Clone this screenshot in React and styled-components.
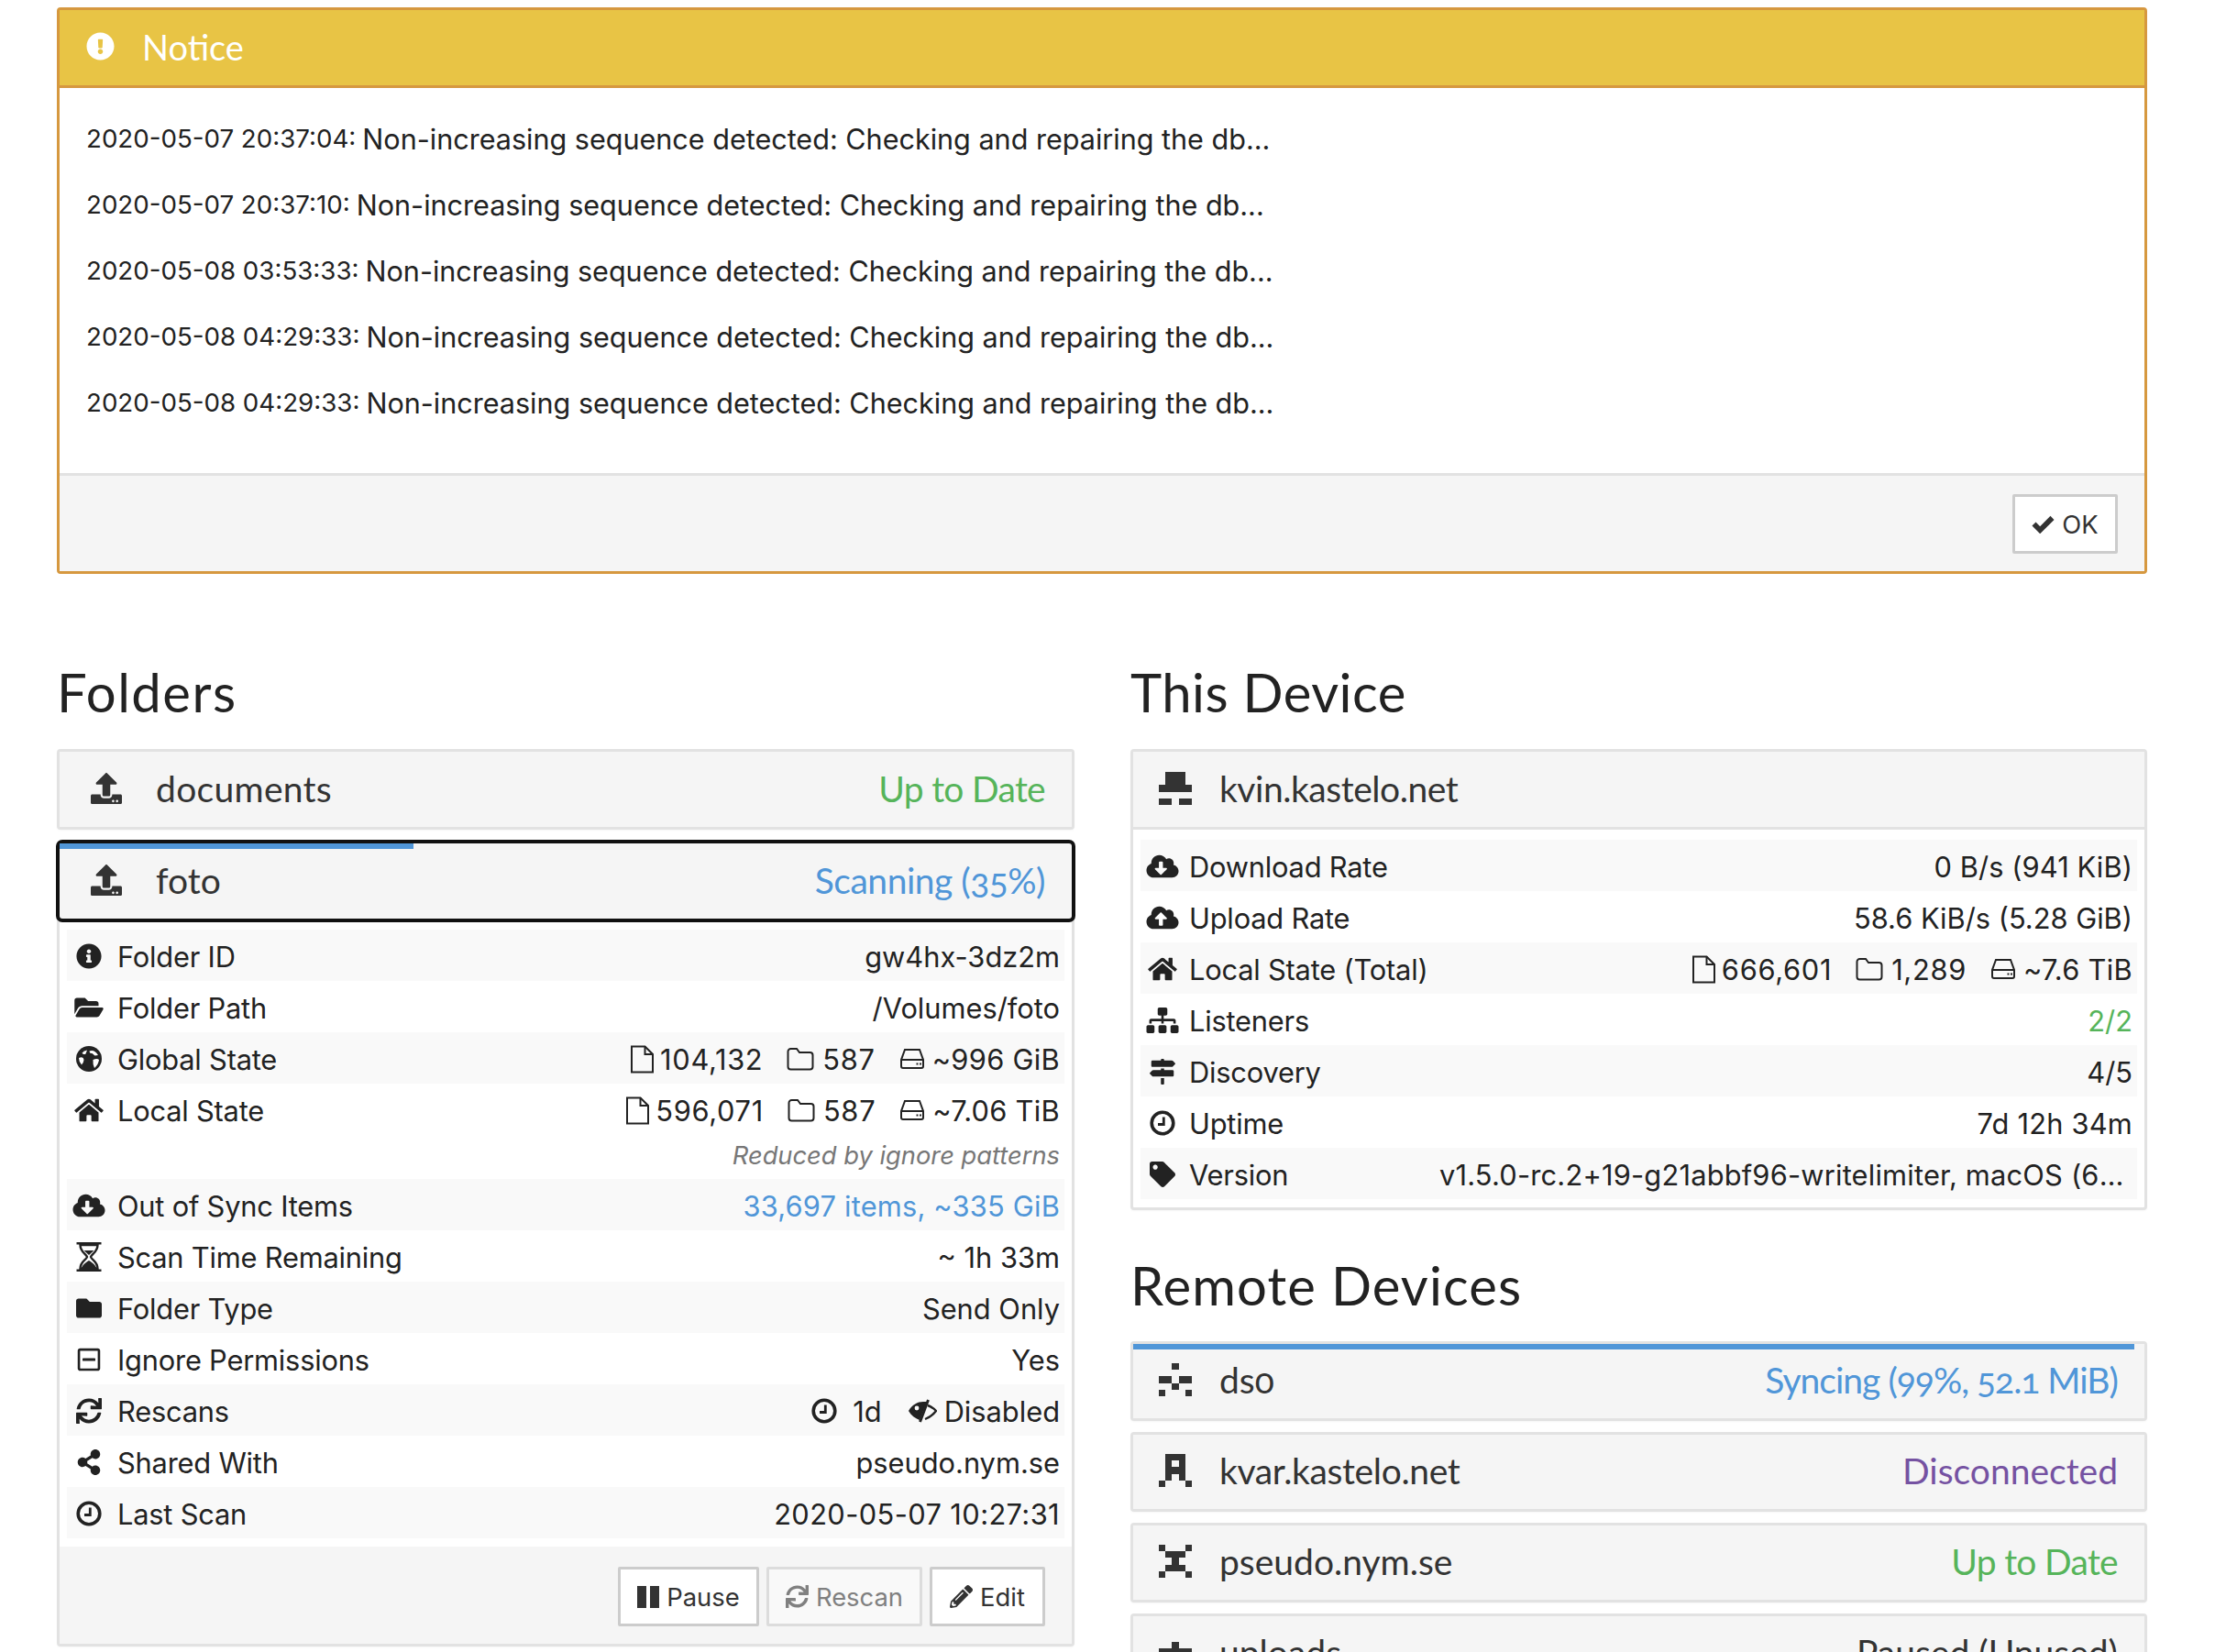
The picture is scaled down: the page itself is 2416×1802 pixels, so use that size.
import React from "react";
import styled, { createGlobalStyle } from "styled-components";
import {
  FaExclamationCircle, FaUpload, FaInfoCircle, FaFolderOpen, FaHome,
  FaCloudDownloadAlt, FaCloudUploadAlt, FaFolder, FaRegMinusSquare, FaSync,
  FaShareAlt, FaPencilAlt, FaSitemap, FaMapSigns, FaTag,
} from "react-icons/fa";

const BODY = `"Inter", "Liberation Sans", sans-serif`;
const HEAD = `"Lato", "Open Sans", sans-serif`;

const Global = createGlobalStyle`
  html, body { margin: 0; padding: 0; height: 1802px; overflow: hidden; background: #fff; }
  body { font-family: ${BODY}; color: #222; }
  * { box-sizing: border-box; }
`;

const Page = styled.div`
  width: 2280px;
  margin-left: 62px;
  padding-top: 8px;
`;

const Notice = styled.section`
  height: 618px;
  border: 3px solid #d6983f;
  border-radius: 4px;
  display: flex;
  flex-direction: column;
  background: #fff;
`;

const NoticeHead = styled.header`
  height: 85px;
  border-bottom: 3px solid #d6983f;
  background: #e8c445;
  color: #fff;
  display: flex;
  align-items: center;
  padding: 0 0 3px 29px;
  font: 400 38px ${HEAD};
  svg { width: 31px; height: 31px; margin-right: 30px; }
`;

const NoticeBody = styled.div`
  flex: 1;
  padding: 19px 29px 0;
`;

const NoticeLine = styled.p`
  margin: 0;
  height: 72px;
  display: flex;
  align-items: center;
  white-space: pre;
  font-size: 30.55px;
  color: #222;
  small { font-size: 27.7px; margin-right: 7px; }
`;

const NoticeFoot = styled.footer`
  height: 107px;
  border-top: 3px solid #e2e2e2;
  background: #f5f5f5;
  display: flex;
  justify-content: flex-end;
  align-items: flex-start;
  padding: 20px 29px 0 0;
`;

const Button = styled.button`
  height: 65px;
  width: ${(p) => p.$w}px;
  border: 3px solid ${(p) => (p.$off ? "#dcdcdc" : "#ccc")};
  border-radius: 2px;
  background: ${(p) => (p.$off ? "#f9f9f9" : "#fff")};
  color: ${(p) => (p.$off ? "#808080" : "#333")};
  font: 400 27.4px ${BODY};
  display: inline-flex;
  align-items: center;
  justify-content: center;
  gap: 8px;
  padding: 0;
  svg { width: 25px; height: 25px; flex: none; }
`;

const Columns = styled.div`
  display: grid;
  grid-template-columns: 1110px 1109px;
  column-gap: 61px;
  margin-top: 99px;
  align-items: start;
`;

const Heading = styled.h3`
  margin: ${(p) => p.$before || 0}px 0 ${(p) => p.$after || 32}px;
  height: 60px;
  font: 400 58px/60px ${HEAD};
  letter-spacing: ${(p) => p.$ls ?? 1.2}px;
  color: #222;
`;

const Panel = styled.div`
  border: 3px solid #e2e2e2;
  border-radius: 4px;
  background: #fff;
  margin-bottom: ${(p) => p.$after ?? 12}px;
  box-shadow: 0 1px 2px rgba(0, 0, 0, 0.04);
`;

const PanelHead = styled.div`
  position: relative;
  height: ${(p) => p.$h || 82}px;
  background: #f5f5f5;
  display: flex;
  align-items: center;
  justify-content: space-between;
  padding: 0 29px 3px ${(p) => p.$pad || 34}px;
  font: 400 39px ${HEAD};
  font-variant-numeric: oldstyle-nums;
  color: #333;
  border-bottom: ${(p) => (p.$line ? "3px solid #e2e2e2" : "0")};
  box-shadow: ${(p) => (p.$focus ? "0 0 0 4px #111" : "none")};
  border-radius: ${(p) => (p.$focus ? "3px" : "0")};
`;

const Progress = styled.i`
  position: absolute;
  left: 0;
  top: 0;
  height: 6px;
  background: #5096d8;
`;

const Title = styled.span`
  display: flex;
  align-items: center;
  letter-spacing: ${(p) => p.$ls || 0}px;
`;

const HeadIcon = styled.span`
  display: inline-flex;
  width: ${(p) => p.$w || 34}px;
  margin-right: ${(p) => p.$gap || 37}px;
  svg { width: ${(p) => p.$w || 34}px; height: ${(p) => p.$w || 34}px; display: block; }
`;

const Status = styled.span`
  color: ${(p) => p.$c || "#333"};
  letter-spacing: ${(p) => p.$ls || 0}px;
`;

const Rows = styled.div`
  --label-gap: ${(p) => (p.$tight ? 10 : 12)}px;
  padding: ${(p) => p.$top}px 8px ${(p) => p.$bottom}px;
`;

const Row = styled.div`
  height: 56px;
  display: flex;
  align-items: center;
  justify-content: space-between;
  padding: 2px 5px 0;
  font-size: 30.8px;
  color: #222;
  background: ${(p) => (p.$shade ? "#f9f9f9" : "#fff")};
`;

const Label = styled.span`
  display: flex;
  align-items: center;
  white-space: nowrap;
  flex: none;
  letter-spacing: -0.2px;
  svg { width: 38px; height: 28px; margin-right: var(--label-gap); flex: none; color: #222; }
`;

const Value = styled.span`
  display: flex;
  align-items: center;
  white-space: nowrap;
  letter-spacing: ${(p) => p.$ls || 0}px;
  color: ${(p) => p.$c || "#222"};
`;

const Stat = styled.span`
  display: inline-flex;
  align-items: center;
  gap: ${(p) => p.$gap || 8}px;
  margin-left: ${(p) => p.$ml ?? 26}px;
  letter-spacing: ${(p) => p.$ls ?? 0.7}px;
  svg { flex: none; }
`;

const Note = styled.div`
  height: 48px;
  padding: 0 5px 3px;
  display: flex;
  align-items: center;
  justify-content: flex-end;
  font-size: 27.3px;
  font-style: italic;
  color: #777;
`;

const Clip = styled.span`
  display: block;
  width: 751px;
  margin-right: 5px;
  overflow: hidden;
  text-overflow: ellipsis;
  white-space: nowrap;
  letter-spacing: 0.2px;
`;

const PanelFoot = styled.div`
  height: 106px;
  background: #f5f5f5;
  display: flex;
  justify-content: flex-end;
  gap: 8px;
  padding: 22px 29px 0 0;
`;

const TallSvg = styled.svg`
  && { height: 32px; }
`;

const PIX = {
  kvin: ".XXX. .XXX. XXXXX ..... XX.XX",
  ds0: "..X.. ..... XX.XX ..X.. X...X",
  kvar: ".XXX. .X.X. .XXX. .X.X. X...X",
  pseudo: "X...X .XXX. ..X.. .XXX. X...X",
  uploads: "..... ..X.. XXXXX X...X ..X..",
};

function Identicon({ id }) {
  const rows = PIX[id].split(" ");
  return (
    <svg viewBox="0 0 5 5" shapeRendering="crispEdges">
      {rows.flatMap((r, y) =>
        [...r].map((c, x) => (c === "X" ? <rect key={`${x}-${y}`} x={x} y={y} width="1" height="1" fill="#333" /> : null))
      )}
    </svg>
  );
}

const FileO = () => (
  <svg viewBox="0 0 27 31" width="27" height="31" fill="none" stroke="#222" strokeWidth="2">
    <path d="M2 1.5h14.5l8.5 8.5v19.5H2z" />
    <path d="M16.5 1.5V10H25" />
  </svg>
);
const FolderO = () => (
  <svg viewBox="0 0 30 26" width="30" height="26" fill="none" stroke="#222" strokeWidth="2">
    <path d="M1.5 5a3 3 0 0 1 3-3h6.5l3 4h11.500a3 3 0 0 1 3 3v12.500a3 3 0 0 1-3 3h-21a3 3 0 0 1-3-3z" />
  </svg>
);
const HddO = () => (
  <svg viewBox="0 0 28 24" width="28" height="24" fill="none" stroke="#222" strokeWidth="2">
    <path d="M6 2h16l4 11v7a2 2 0 0 1-2 2H4a2 2 0 0 1-2-2v-7z" />
    <path d="M2 13h24" />
    <path d="M18.500 17.500h2M22 17.500h2" />
  </svg>
);
const ClockO = ({ size }) => (
  <svg viewBox="0 0 28 28" width={size} height={size} fill="none" stroke="#222">
    <circle cx="14" cy="14" r="11.800" strokeWidth="3.600" />
    <path d="M15.300 7.500v8H9" strokeWidth="2.800" />
  </svg>
);
const EyeSlash = () => (
  <svg viewBox="0 0 32 26" width="32" height="26" fill="none" stroke="#222">
    <path d="M1 13C5 6 11 3 17 3h4l-8 20C8 21 4 18 1 13z" fill="#222" stroke="none" />
    <circle cx="10" cy="10" r="2.400" fill="#f9f9f9" stroke="none" />
    <path d="M22.500 1L13.500 25" strokeWidth="3" />
    <path d="M22 7c3 1 6 3 9 6-3 4-7 7-12 9" strokeWidth="2.400" />
  </svg>
);
const Globe = () => (
  <svg viewBox="0 0 28 28">
    <circle cx="14" cy="14" r="14" fill="#222" />
    <g fill="#fff">
      <path d="M6.500 7.500Q9 5.200 12 4.500L10.500 8.500Q8 10 6.500 7.500z" />
      <path d="M14.500 5.500Q20 3.500 24 10L20.500 10.500 17.500 8Q14.500 8.500 14.500 5.500z" />
      <path d="M3 13Q8 11 8.500 15 8 19 6 20.500 3 17 3 13z" />
      <path d="M18.500 15Q23 13 25 15 24.500 20 20 24 18 20 18.500 15z" />
    </g>
  </svg>
);
const Hourglass = () => (
  <TallSvg viewBox="0 0 27 32" fill="none">
    <path d="M0 1.200h27M0 30.800h27" stroke="#222" strokeWidth="2.400" />
    <path d="M4 3c0 8 6.500 9.500 7.500 13C10.500 19.500 4 21 4 29h19c0-8-6.500-9.500-7.500-13C16.500 12.500 23 11 23 3z" stroke="#222" strokeWidth="2.400" />
    <path d="M5 29c1-4 5-7 8.500-9 3.500 2 7.500 5 8.500 9z" fill="#222" />
    <path d="M8 9h11l-5.500 5z" fill="#222" />
  </TallSvg>
);
const Check = () => (
  <svg viewBox="0 0 26 21" style={{ width: 25, height: 20 }} fill="none" stroke="#333" strokeWidth="6">
    <path d="M2.500 10L9.500 17L23.500 3" />
  </svg>
);
const Pause = () => (
  <svg viewBox="0 0 24 24" style={{ width: 24, height: 24 }} fill="#333">
    <rect x="0" y="0" width="10" height="24" />
    <rect x="14" y="0" width="10" height="24" />
  </svg>
);

const NoticeRows = ["2020-05-07 20:37:04:", "2020-05-07 20:37:10:", "2020-05-08 03:53:33:", "2020-05-08 04:29:33:", "2020-05-08 04:29:33:"];

const triple = (a, b, c) => (
  <>
    <Stat $gap={6}><FileO />{a}</Stat>
    <Stat $gap={9}><FolderO />{b}</Stat>
    <Stat $ls={0.3}><HddO />{c}</Stat>
  </>
);

export default function App() {
  return (
    <Page>
      <Global />
      <Notice>
        <NoticeHead><FaExclamationCircle />Notice</NoticeHead>
        <NoticeBody>
          {NoticeRows.map((d, i) => (
            <NoticeLine key={i}><small>{d}</small>Non-increasing sequence detected: Checking and repairing the db...</NoticeLine>
          ))}
        </NoticeBody>
        <NoticeFoot><Button $w={115}><Check />OK</Button></NoticeFoot>
      </Notice>

      <Columns>
        <div>
          <Heading $ls={1.5}>Folders</Heading>
          <Panel>
            <PanelHead>
              <Title $ls={0.3}><HeadIcon><FaUpload /></HeadIcon>documents</Title>
              <Status $c="#56b45a" $ls={-0.7}>Up to Date</Status>
            </PanelHead>
          </Panel>
          <Panel $after={0}>
            <PanelHead $focus>
              <Progress style={{ width: "35%" }} />
              <Title><HeadIcon><FaUpload /></HeadIcon>foto</Title>
              <Status $c="#5096d8" $ls={-0.5}>Scanning (35%)</Status>
            </PanelHead>
            <Rows $top={12} $bottom={9}>
              <Row $shade><Label><FaInfoCircle />Folder ID</Label><Value>gw4hx-3dz2m</Value></Row>
              <Row><Label><FaFolderOpen />Folder Path</Label><Value>/Volumes/foto</Value></Row>
              <Row $shade><Label><Globe />Global State</Label><Value>{triple("104,132", "587", "~996 GiB")}</Value></Row>
              <Row><Label><FaHome />Local State</Label><Value>{triple("596,071", "587", "~7.06 TiB")}</Value></Row>
              <Note>Reduced by ignore patterns</Note>
              <Row $shade><Label><FaCloudDownloadAlt />Out of Sync Items</Label><Value $c="#5096d8" $ls={0.2}>33,697 items, ~335 GiB</Value></Row>
              <Row><Label><Hourglass />Scan Time Remaining</Label><Value>~ 1h 33m</Value></Row>
              <Row $shade><Label><FaFolder />Folder Type</Label><Value>Send Only</Value></Row>
              <Row><Label><FaRegMinusSquare />Ignore Permissions</Label><Value>Yes</Value></Row>
              <Row $shade>
                <Label><FaSync />Rescans</Label>
                <Value>
                  <Stat $gap={17} $ls={0}><ClockO size={28} />1d</Stat>
                  <Stat $gap={8} $ml={28} $ls={0}><EyeSlash />Disabled</Stat>
                </Value>
              </Row>
              <Row><Label><FaShareAlt />Shared With</Label><Value>pseudo.nym.se</Value></Row>
              <Row $shade><Label><ClockO />Last Scan</Label><Value $ls={0.4}>2020-05-07 10:27:31</Value></Row>
            </Rows>
            <PanelFoot>
              <Button $w={154}><Pause />Pause</Button>
              <Button $w={170} $off><FaSync />Rescan</Button>
              <Button $w={126}><FaPencilAlt />Edit</Button>
            </PanelFoot>
          </Panel>
        </div>

        <div>
          <Heading $ls={0.5}>This Device</Heading>
          <Panel $after={0}>
            <PanelHead $line $h={85} $pad={28}>
              <Title $ls={-0.45}><HeadIcon $w={36} $gap={30}><Identicon id="kvin" /></HeadIcon>kvin.kastelo.net</Title>
            </PanelHead>
            <Rows $top={11} $bottom={9} $tight>
              <Row $shade><Label><FaCloudDownloadAlt />Download Rate</Label><Value $ls={0.1}>0 B/s (941 KiB)</Value></Row>
              <Row><Label><FaCloudUploadAlt />Upload Rate</Label><Value>58.6 KiB/s (5.28 GiB)</Value></Row>
              <Row $shade><Label><FaHome />Local State (Total)</Label><Value>{triple("666,601", "1,289", "~7.6 TiB")}</Value></Row>
              <Row><Label><FaSitemap />Listeners</Label><Value $c="#56b45a">2/2</Value></Row>
              <Row $shade><Label><FaMapSigns />Discovery</Label><Value>4/5</Value></Row>
              <Row><Label><ClockO />Uptime</Label><Value $ls={0.2}>7d 12h 34m</Value></Row>
              <Row $shade><Label><FaTag />Version</Label><Clip>v1.5.0-rc.2+19-g21abbf96-writelimiter, macOS (64 bit)</Clip></Row>
            </Rows>
          </Panel>

          <Heading $before={52} $after={31} $ls={1.1}>Remote Devices</Heading>
          <Panel>
            <PanelHead $pad={28} $h={81}>
              <Progress style={{ width: "99%" }} />
              <Title><HeadIcon $w={36} $gap={30}><Identicon id="ds0" /></HeadIcon>ds0</Title>
              <Status $c="#5096d8" $ls={-1}>Syncing (99%, 52.1 MiB)</Status>
            </PanelHead>
          </Panel>
          <Panel>
            <PanelHead $pad={28} $h={81}>
              <Title $ls={-0.35}><HeadIcon $w={36} $gap={30}><Identicon id="kvar" /></HeadIcon>kvar.kastelo.net</Title>
              <Status $c="#7552a2">Disconnected</Status>
            </PanelHead>
          </Panel>
          <Panel>
            <PanelHead $pad={28} $h={81}>
              <Title><HeadIcon $w={36} $gap={30}><Identicon id="pseudo" /></HeadIcon>pseudo.nym.se</Title>
              <Status $c="#56b45a" $ls={-0.7}>Up to Date</Status>
            </PanelHead>
          </Panel>
          <Panel>
            <PanelHead $pad={28} $h={81}>
              <Title><HeadIcon $w={36} $gap={30}><Identicon id="uploads" /></HeadIcon>uploads</Title>
              <Status>Paused (Unused)</Status>
            </PanelHead>
          </Panel>
        </div>
      </Columns>
    </Page>
  );
}
